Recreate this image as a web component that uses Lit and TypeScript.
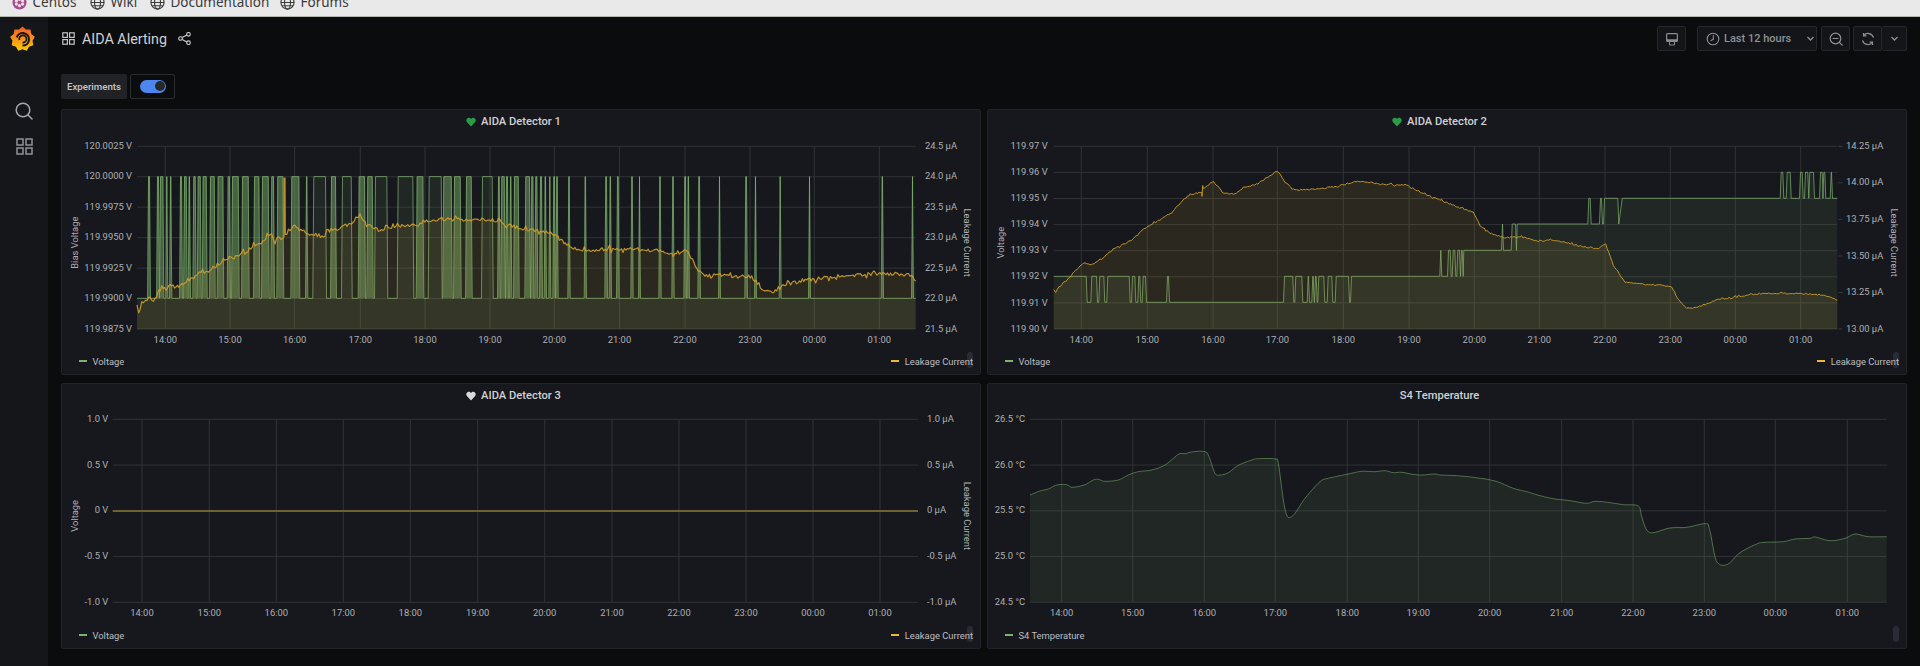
import { LitElement, html, css, svg } from "lit";
import { customElement } from "lit/decorators.js";

type Pt = [number, number];

const zoomMap = (ox: number, oy: number) => (pts: number[][]): Pt[] =>
  pts.map(([a, b]) => [ox + a / 3, oy + b / 3] as Pt);

function rng(seed: number) {
  return () => {
    seed |= 0; seed = (seed + 0x6d2b79f5) | 0;
    let t = Math.imul(seed ^ (seed >>> 15), 1 | seed);
    t = (t + Math.imul(t ^ (t >>> 7), 61 | t)) ^ t;
    return ((t ^ (t >>> 14)) >>> 0) / 4294967296;
  };
}

function noisy(pts: Pt[], amp: number, seed: number, step = 1.5): Pt[] {
  const r = rng(seed);
  const out: Pt[] = [];
  for (let i = 0; i < pts.length - 1; i++) {
    const [x0, y0] = pts[i], [x1, y1] = pts[i + 1];
    const n = Math.max(1, Math.round((x1 - x0) / step));
    for (let k = 0; k < n; k++) {
      const t = k / n;
      const jitter = (r() - 0.5) * (r() < 0.15 ? amp * 2.4 : amp);
      out.push([x0 + (x1 - x0) * t, y0 + (y1 - y0) * t + jitter]);
    }
  }
  out.push(pts[pts.length - 1]);
  return out;
}

function smooth(pts: Pt[]): Pt[] {
  const out: Pt[] = [];
  for (let i = 0; i < pts.length - 1; i++) {
    const p0 = pts[Math.max(0, i - 1)], p1 = pts[i], p2 = pts[i + 1], p3 = pts[Math.min(pts.length - 1, i + 2)];
    for (let k = 0; k < 6; k++) {
      const t = k / 6, t2 = t * t, t3 = t2 * t;
      const f = (a: number, b: number, c: number, d: number) =>
        0.5 * (2 * b + (c - a) * t + (2 * a - 5 * b + 4 * c - d) * t2 + (3 * b - a - 3 * c + d) * t3);
      out.push([f(p0[0], p1[0], p2[0], p3[0]), f(p0[1], p1[1], p2[1], p3[1])]);
    }
  }
  out.push(pts[pts.length - 1]);
  return out;
}

function pulses(intervals: number[][], lo: number, hi: number): Pt[] {
  const out: Pt[] = [];
  for (const [a, b] of intervals) {
    out.push([a - 0.5, lo], [a + 0.5, hi], [b - 0.5, hi], [b + 0.5, lo]);
  }
  return out;
}

const toD = (pts: Pt[]) => "M" + pts.map(([x, y]) => `${x.toFixed(1)} ${y.toFixed(1)}`).join("L");
const toArea = (pts: Pt[], base: number) =>
  `${toD(pts)}L${pts[pts.length - 1][0].toFixed(1)} ${base}L${pts[0][0].toFixed(1)} ${base}Z`;

const Z3 = zoomMap(50, 105), Z4 = zoomMap(500, 105), Z5 = zoomMap(985, 105), Z6 = zoomMap(1440, 105);
const Z8 = zoomMap(985, 380), Z9 = zoomMap(1440, 380);

/* ---------- detector 1 ---------- */
const p1Hi = [
  ...[[294,300],[321,327],[330,340],[349,352],[360,364],[390,396],[402,410],[416,420],[430,437],[443,452],[458,470],[480,494],
    [503,520],[533,540],[546,566],[576,596],[612,628],[636,656],[664,672],[682,700],[724,748],[768,772],[790,828],[843,858],
    [876,905],[926,945],[952,968],[975,1012],[1043,1090],[1100,1120],[1136,1175],[1180,1205],[1212,1232],[1248,1265],[1296,1328]
  ].map(([a,b]) => [50 + a/3, 50 + b/3]),
  ...[[1344,1349]].map(([a,b]) => [50 + a/3, 50 + b/3]),
  ...[[4,14],[18,24],[30,34],[42,56],[76,90],[94,100],[106,112],[120,126],[134,138],[148,151],[160,165],[169,173],[205,209],
    [254,258],[316,321],[329,333],[351,356],[394,398],[417,420],[478,482],[517,521],[553,558],[563,567],[595,600],[657,660],
    [736,741],[765,768],[839,842],[927,930],[1145,1149],[1236,1239]].map(([a,b]) => [500 + a/3, 500 + b/3]),
];
const GLOW = 298.3, GHIGH = 176.6;
const p1Green: Pt[] = [[137, GLOW], ...pulses(p1Hi, GLOW, GHIGH), [915.7, GLOW]];
/* Narrow pulses read as translucent bright bands in the source chart. */
const p1Bands = p1Hi.filter(([a, b]) => b - a < 9 && a < 560 || b - a < 3.5);

const p1Yb: Pt[] = [
  ...Z3([[261,600],[266,622],[275,595],[300,578],[310,588],[335,548],[365,543],[400,540],[440,510],[480,495],[520,465],[580,445],[620,420],[665,390],[675,408],[702,395]]),
];
const p1Yc: Pt[] = [
  ...Z3([[706,393],[720,375],[735,362],[770,388],[825,398],[830,375],[860,375],[900,355],[930,330],[945,355],[990,378],[1020,368],[1060,362],[1100,362],[1120,350],[1180,342],[1240,345],[1300,342]]),
  ...Z4([[0,352],[60,370],[130,378],[165,390],[205,425],[225,432],[262,438],[320,432],[400,432],[480,438],[520,445],[560,436],[590,490],[610,512],[660,510],[700,515],[755,515],[790,555],[830,560],[850,540],[920,525],[1000,515],[1050,512],[1140,505],[1230,510],[1247,528]]),
];
const p1Yellow: Pt[] = [...noisy(p1Yb, 4, 11), [284, 178], [285, 178], ...noisy(p1Yc, 3.4, 12)];

/* ---------- detector 2 ---------- */
const L = { l1: 302.3, l2: 276.3, l3: 250.3, l4: 224, l5: 198.3, l6: 172.3 };
const m5 = (v: number[][]) => v.map(([a, b]) => [985 + a / 3, 985 + b / 3]);
const m6 = (v: number[][]) => v.map(([a, b]) => [1440 + a / 3, 1440 + b / 3]);
const p2Green: Pt[] = [
  [1053.7, L.l2],
  ...pulses(m5([[206,305],[319,336],[343,358],[367,434],[441,451],[460,466],[473,483],[546,552],[897,925],[931,952],[968,972],[982,986],[990,995],[1000,1018],[1028,1042],[1052,1092],[1098,1365]]), L.l1, L.l2).slice(2, -1),
  ...pulses(m6([[1,4],[24,32],[38,46],[52,60],[63,68]]), L.l2, L.l3),
  ...pulses(m6([[70,185]]), L.l2, L.l3).slice(1, 3),
  ...pulses(m6([[186,189],[215,228]]), L.l3, L.l4),
  ...pulses(m6([[230,442]]), L.l3, L.l4).slice(1, 3),
  ...pulses(m6([[445,452],[480,486],[492,535]]), L.l4, L.l5),
  ...pulses(m6([[545,1020]]), L.l4, L.l5).slice(1, 3),
  ...pulses(m6([[1022,1030],[1040,1052],[1080,1088],[1095,1105],[1108,1122],[1140,1148],[1150,1156],[1172,1176]]), L.l5, L.l6),
  [1837.3, L.l5],
];
const p2Yellow: Pt[] = noisy([
  ...Z5([[206,558],[212,562],[222,545],[250,520],[285,482],[300,472],[315,480],[350,462],[385,432],[440,405],[480,370],[520,347],[560,322],[590,290],[615,268],[650,262],[651,275],[653,242],[655,250],[685,228],[712,262],[750,268],[775,248],[810,240],[840,222],[878,198],[900,232],[930,255],[1000,252],[1050,245],[1100,232],[1130,228],[1200,240],[1260,238],[1320,268],[1365,285]]),
  ...Z6([[50,305],[100,322],[120,360],[150,385],[190,398],[240,395],[290,408],[340,405],[400,418],[470,432],[497,418],[520,480],[555,532],[580,535],[640,538],[695,545],[720,590],[740,610],[770,608],[840,582],[900,575],[935,568],[1000,565],[1080,565],[1150,570],[1192,585]]),
], 1.4, 23);

/* ---------- S4 temperature ---------- */
const tempLine: Pt[] = smooth([
  ...Z8([[135,345],[165,333],[190,327],[215,315],[245,314],[262,322],[300,314],[325,300],[340,298],[360,304],[400,300],[430,285],[460,275],[500,270],[540,255],[580,223],[600,221],[625,215],[660,215],[672,230],[690,280],[705,285],[730,278],[760,256],[800,240],[820,236],[870,237],[880,250],[895,360],[905,405],[915,412],[930,400],[960,355],[1005,305],[1030,295],[1090,282],[1130,274],[1170,275],[1200,272],[1225,278],[1250,277],[1300,285],[1350,282]]),
  ...Z9([[0,285],[50,287],[100,292],[165,303],[220,325],[260,335],[300,347],[340,356],[390,362],[440,370],[465,364],[510,368],[550,374],[595,378],[605,410],[620,450],[640,458],[690,444],[740,442],[795,431],[808,445],[825,530],[835,550],[850,556],[870,548],[900,518],[950,492],[975,487],[1030,485],[1065,477],[1110,475],[1125,471],[1170,482],[1215,475],[1245,462],[1285,470],[1340,470]]),
]);

const GREEN = "#7eb26d", YELLOW = "#eab839", YLINE = "#cf9f2c";

interface Series { pts: Pt[]; color: string; fill: string; w?: number; op?: number }
interface Label { t: string; y: number }
interface PanelSpec {
  px: number; py: number; title: string; heart?: string;
  x0: number; x1: number; y0: number; y1: number;
  hLines: number[]; left: Label[]; leftEnd: number;
  right?: Label[]; rightStart?: number; rightTicks?: boolean;
  xTicks: number[]; leftTitle?: string; leftTitleX?: number; rightTitle?: string; rightTitleX?: number;
  series: Series[]; legend: { t: string; c: string }[]; legendRight?: { t: string; c: string };
  zero?: number; bands?: number[][];
}

const evenly = (a: number, b: number, n: number) => Array.from({ length: n }, (_, i) => a + ((b - a) * i) / (n - 1));
const labelled = (ts: string[], a: number, b: number): Label[] => {
  const ys = evenly(a, b, ts.length);
  return ts.map((t, i) => ({ t, y: ys[i] }));
};
const HOURS = ["14:00","15:00","16:00","17:00","18:00","19:00","20:00","21:00","22:00","23:00","00:00","01:00"];

const PANELS: PanelSpec[] = [
  {
    px: 61, py: 109, title: "AIDA Detector 1", heart: "#299c46",
    x0: 137, x1: 915.7, y0: 146.3, y1: 329,
    hLines: evenly(146.3, 329, 7),
    left: labelled(["120.0025 V","120.0000 V","119.9975 V","119.9950 V","119.9925 V","119.9900 V","119.9875 V"], 146.3, 329), leftEnd: 132,
    right: labelled(["24.5 µA","24.0 µA","23.5 µA","23.0 µA","22.5 µA","22.0 µA","21.5 µA"], 146.3, 329), rightStart: 925,
    xTicks: [165.3,230,294.6,360.3,425,490,554.3,619.5,685,750,814.3,879.3],
    leftTitle: "Bias Voltage", leftTitleX: 74.7, rightTitle: "Leakage Current", rightTitleX: 967,
    bands: p1Bands,
    series: [
      { pts: p1Green, color: GREEN, fill: GREEN, w: 1, op: 0.72 },
      { pts: p1Yellow, color: YLINE, fill: YELLOW, w: 1.2, op: 0.9 },
    ],
    legend: [{ t: "Voltage", c: GREEN }], legendRight: { t: "Leakage Current", c: YELLOW },
  },
  {
    px: 987, py: 109, title: "AIDA Detector 2", heart: "#299c46",
    x0: 1053.7, x1: 1837.3, y0: 146.3, y1: 329,
    hLines: evenly(146.3, 329, 8),
    left: labelled(["119.97 V","119.96 V","119.95 V","119.94 V","119.93 V","119.92 V","119.91 V","119.90 V"], 146.3, 329), leftEnd: 1047.7,
    right: labelled(["14.25 µA","14.00 µA","13.75 µA","13.50 µA","13.25 µA","13.00 µA"], 146.3, 329), rightStart: 1846, rightTicks: true,
    xTicks: [1081.3,1147.3,1213,1277.4,1343.3,1409,1474.3,1539.3,1605,1670.3,1735.3,1800.7],
    leftTitle: "Voltage", leftTitleX: 1001, rightTitle: "Leakage Current", rightTitleX: 1893.7,
    series: [
      { pts: p2Green, color: GREEN, fill: GREEN, w: 1, op: 0.72 },
      { pts: p2Yellow, color: YLINE, fill: YELLOW, w: 1, op: 0.9 },
    ],
    legend: [{ t: "Voltage", c: GREEN }], legendRight: { t: "Leakage Current", c: YELLOW },
  },
  {
    px: 61, py: 383, title: "AIDA Detector 3", heart: "#d8d9da",
    x0: 112.7, x1: 918, y0: 419.3, y1: 602.3,
    hLines: evenly(419.3, 602.3, 5),
    left: labelled(["1.0 V","0.5 V","0 V","-0.5 V","-1.0 V"], 419.3, 602.3), leftEnd: 108.3,
    right: labelled(["1.0 µA","0.5 µA","0 µA","-0.5 µA","-1.0 µA"], 419.3, 602.3), rightStart: 927,
    xTicks: [142,209.3,276.3,343.3,410.3,477.7,544.7,612,679,746,813,880],
    leftTitle: "Voltage", leftTitleX: 74.7, rightTitle: "Leakage Current", rightTitleX: 967,
    series: [], zero: 511,
    legend: [{ t: "Voltage", c: GREEN }], legendRight: { t: "Leakage Current", c: YELLOW },
  },
  {
    px: 987, py: 383, title: "S4 Temperature",
    x0: 1030, x1: 1886.7, y0: 419.3, y1: 602.3,
    hLines: evenly(419.3, 602.3, 5),
    left: labelled(["26.5 °C","26.0 °C","25.5 °C","25.0 °C","24.5 °C"], 419.3, 602.3), leftEnd: 1025,
    xTicks: [1061.7,1132.7,1204.3,1275.3,1347.3,1418.3,1489.7,1561.7,1633,1704.3,1775.3,1847.3],
    series: [{ pts: tempLine, color: GREEN, fill: GREEN, w: 1, op: 0.55 }],
    legend: [{ t: "S4 Temperature", c: GREEN }],
  },
];

const W = 918, H = 217, TITLE_H = 23;

@customElement("graph-panel")
class GraphPanel extends LitElement {
  static properties = { spec: { attribute: false } };
  spec!: PanelSpec;

  static styles = css`
    :host { display: block; min-width: 0; }
    .panel {
      height: 266px; box-sizing: border-box; background: #16181d; border: 1px solid #212327; border-radius: 2px;
      display: flex; flex-direction: column; overflow: hidden; position: relative;
    }
    .title {
      height: 23px; flex: none; display: flex; align-items: center; justify-content: center; gap: 5px;
      font: 500 11.2px Roboto, sans-serif; color: #d0d1d3; padding-right: 15px; box-sizing: border-box;
    }
    .title svg { width: 10px; height: 10px; display: block; }
    .plot { display: block; width: 918px; height: 217px; flex: none; }
    .axis { font-family: Roboto, sans-serif; font-size: 9.4px; fill: #aeb0b3; }
    .legend {
      flex: 1; display: flex; justify-content: space-between; align-items: center; position: relative;
      padding: 0 7px 2px 16.5px; font: 9.4px Roboto, sans-serif; color: #bdbfc2;
    }
    .item { display: flex; align-items: center; gap: 5.5px; }
    .swatch { width: 8.5px; height: 1.5px; display: block; }
    .thumb {
      position: absolute; right: 7px; bottom: 6px; width: 6px; height: 16px; border-radius: 3px; background: #282b34;
    }
  `;

  render() {
    const s = this.spec;
    const vx = s.px + 1, vy = s.py + 1 + TITLE_H;
    return html`<div class="panel">
      <div class="thumb"></div>
      <div class="title">
        ${s.heart ? html`<svg viewBox="0 0 24 24"><path fill=${s.heart} d="M12 22.5 2.6 12.6C-.4 9.4.2 4.6 3.4 2.7 6.5.9 10 2 12 5c2-3 5.500-4.100 8.600-2.300 3.200 1.900 3.800 6.700.8 9.900z"/></svg>` : ""}
        <span>${s.title}</span>
      </div>
      <svg class="plot" viewBox="${vx} ${vy} ${W} ${H}">
        ${s.hLines.map((y) => svg`<line x1=${s.x0} x2=${s.x1} y1=${y} y2=${y} stroke="#303236" stroke-width="1"/>`)}
        ${s.xTicks.map((x) => svg`<line x1=${x} x2=${x} y1=${s.y0} y2=${s.y1} stroke="#303236" stroke-width="1"/>`)}
        ${(s.bands ?? []).map(([a, b]) => svg`<rect x=${a} y=${GHIGH} width=${b - a} height=${GLOW - GHIGH} fill=${GREEN} fill-opacity="0.42"/>`)}
        ${s.series.map((a) => svg`
          <path d=${toArea(a.pts, s.y1)} fill=${a.fill} fill-opacity="0.1"/>
          <path d=${toD(a.pts)} fill="none" stroke=${a.color} stroke-width=${a.w ?? 1} stroke-opacity=${a.op ?? 1} stroke-linejoin="round"/>`)}
        ${s.zero !== undefined ? svg`<line x1=${s.x0} x2=${s.x1} y1=${s.zero} y2=${s.zero} stroke="#6e6230" stroke-width="2"/>` : ""}
        ${s.left.map((l) => svg`<text class="axis" x=${s.leftEnd} y=${l.y + 2.6} text-anchor="end">${l.t}</text>`)}
        ${(s.right ?? []).map((l) => svg`
          ${s.rightTicks ? svg`<line x1=${s.x1 + 1} x2=${s.x1 + 5} y1=${l.y} y2=${l.y} stroke="#3a3c40"/>` : ""}
          <text class="axis" x=${s.rightStart!} y=${l.y + 2.6}>${l.t}</text>`)}
        ${s.xTicks.map((x, i) => svg`<text class="axis" x=${x} y=${s.y1 + 13.6} text-anchor="middle">${HOURS[i]}</text>`)}
        ${s.leftTitle ? svg`<text class="axis" text-anchor="middle" transform="translate(${s.leftTitleX! + 3.2} ${(s.y0 + s.y1) / 2 + 5}) rotate(-90)">${s.leftTitle}</text>` : ""}
        ${s.rightTitle ? svg`<text class="axis" text-anchor="middle" transform="translate(${s.rightTitleX! - 3.2} ${(s.y0 + s.y1) / 2 + 5}) rotate(90)">${s.rightTitle}</text>` : ""}
      </svg>
      <div class="legend">
        <div>${s.legend.map((l) => html`<div class="item"><i class="swatch" style="background:${l.c}"></i>${l.t}</div>`)}</div>
        ${s.legendRight ? html`<div class="item"><i class="swatch" style="background:${s.legendRight.c}"></i>${s.legendRight.t}</div>` : ""}
      </div>
    </div>`;
  }
}

const gearPoints = (() => {
  const pts: string[] = [];
  for (let i = 0; i < 18; i++) {
    const a = (i * Math.PI) / 9 - Math.PI / 2;
    const r = i % 2 === 0 ? 12 : 9.8;
    pts.push(`${(12 + r * Math.cos(a)).toFixed(2)},${(12 + r * Math.sin(a)).toFixed(2)}`);
  }
  return pts.join(" ");
})();

const globe = html`<svg class="glb" viewBox="0 0 16 16" fill="none" stroke="#3c3c3c" stroke-width="1.2"><circle cx="8" cy="8" r="7"/><ellipse cx="8" cy="8" rx="3.200" ry="7"/><path d="M1 8h14M2 4.500h12M2 11.500h12"/></svg>`;

@customElement("app-root")
class AppRoot extends LitElement {
  static styles = css`
    :host { display: block; width: 1920px; height: 666px; overflow: hidden; background: #0b0c0e; font-family: Roboto, sans-serif; }
    .bookmarks {
      height: 17px; box-sizing: border-box; background: #e9e9e9; border-bottom: 1px solid #b5b5b0;
      display: flex; align-items: flex-end; overflow: hidden; padding: 0 0 10px 12px;
      font: 13.5px "Noto Sans", sans-serif; color: #3a3a3a;
    }
    .mark { display: flex; align-items: center; gap: 5.500px; line-height: 20px; flex: none; height: 20px; margin-bottom: -6px; }
    .mark.c { width: 78px; } .mark.w { width: 60px; } .mark.d { width: 130px; }
    .mark svg { width: 15px; height: 15px; display: block; flex: none; }
    .shell { display: flex; height: 649px; }
    .side {
      width: 48px; flex: none; background: #14161a; display: flex; flex-direction: column; align-items: center; padding-top: 9px; box-sizing: border-box;
    }
    .logo { width: 25px; height: 26px; display: block; margin-left: -4px; }
    .side .s1 { width: 18px; height: 18px; margin-top: 50px; display: block; }
    .side .s2 { width: 17px; height: 17px; margin-top: 18px; display: block; }
    .main { flex: 1; min-width: 0; padding: 9px 13px 0; box-sizing: border-box; }
    .top { height: 25px; display: flex; align-items: center; }
    .crumb { display: flex; align-items: center; color: #d0d1d3; font-size: 14.300px; flex: 1; margin-left: 1px; }
    .crumb .ic { width: 13px; height: 13px; margin-right: 7px; }
    .crumb .sh { width: 13px; height: 13px; margin-left: 11px; }
    .tbtn {
      height: 25px; box-sizing: border-box; border: 1px solid #25272b; border-radius: 2px; background: #131519;
      display: flex; align-items: center; justify-content: center; color: #8f9194;
    }
    .tbtn.sq { width: 29px; }
    .tbtn.time { width: 120px; margin: 0 4px 0 11px; font-weight: 500; font-size: 11px; justify-content: flex-start; padding-left: 8px; gap: 4px; white-space: nowrap; }
    .tbtn.time .chev { margin-left: 11px; }
    .group { display: flex; margin-left: 3px; }
    .group .tbtn + .tbtn { width: 25px; border-left: none; }
    .tbtn svg { width: 14px; height: 14px; display: block; flex: none; }
    .tbtn svg.chev { width: 9px; height: 9px; }
    .vars { height: 24.500px; margin-top: 23px; display: flex; gap: 3px; }
    .vlabel {
      width: 66px; box-sizing: border-box; background: #202226; border-radius: 2px; font: 500 9.700px Roboto, sans-serif;
      color: #c6c7c9; display: flex; align-items: center; justify-content: center;
    }
    .switch { width: 45px; box-sizing: border-box; border: 1px solid #2a2c30; border-radius: 2px; display: flex; align-items: center; justify-content: center; }
    .track { width: 26px; height: 13px; border-radius: 7px; background: #4d86ef; display: flex; justify-content: flex-end; align-items: center; padding: 0 1px; box-sizing: border-box; }
    .knob { width: 10px; height: 10px; border-radius: 50%; background: #25272b; }
    .grid { display: grid; grid-template-columns: 920px 920px; column-gap: 6px; row-gap: 8px; margin-top: 10.500px; }
  `;

  render() {
    return html`
      <div class="bookmarks">
        <div class="mark c">
          <svg viewBox="0 0 16 16"><circle cx="8" cy="8" r="7.500" fill="#a14f8c"/><g fill="#f2dbe9"><circle cx="8" cy="4.600" r="1.700"/><circle cx="8" cy="11.400" r="1.700"/><circle cx="4.700" cy="6.300" r="1.700"/><circle cx="11.300" cy="6.300" r="1.700"/><circle cx="4.700" cy="9.700" r="1.700"/><circle cx="11.300" cy="9.700" r="1.700"/></g></svg>
          <span>Centos</span>
        </div>
        <div class="mark w">${globe}<span>Wiki</span></div>
        <div class="mark d">${globe}<span>Documentation</span></div>
        <div class="mark">${globe}<span>Forums</span></div>
      </div>
      <div class="shell">
        <nav class="side">
          <svg class="logo" viewBox="0 0 24 24">
            <defs><linearGradient id="lg" x1="0" y1="0" x2="0" y2="1"><stop offset="0" stop-color="#f05a28"/><stop offset="1" stop-color="#fbca0a"/></linearGradient></defs>
            <polygon points=${gearPoints} fill="url(#lg)"/>
            <path d="M6.500 10.500a6 6 0 1 1 5.500 7.800" fill="none" stroke="#14161a" stroke-width="2"/>
            <path d="M9 13a3.500 3.500 0 1 1 3 2.500" fill="none" stroke="#14161a" stroke-width="1.600"/>
          </svg>
          <svg class="s1" viewBox="0 0 18 18" fill="none" stroke="#a5a8ad" stroke-width="1.500"><circle cx="8" cy="8" r="6.800"/><path d="M13 13l4 4" stroke-linecap="round"/></svg>
          <svg class="s2" viewBox="0 0 17 17" fill="none" stroke="#8f9297" stroke-width="1.500"><rect x="1" y="1" width="6" height="6"/><rect x="10" y="1" width="6" height="6"/><rect x="1" y="10" width="6" height="6"/><rect x="10" y="10" width="6" height="6"/></svg>
        </nav>
        <main class="main">
          <div class="top">
            <div class="crumb">
              <svg class="ic" viewBox="0 0 13 13" fill="none" stroke="#c4c5c8" stroke-width="1.200"><rect x=".8" y=".8" width="4.600" height="4.600"/><rect x="7.600" y=".8" width="4.600" height="4.600"/><rect x=".8" y="7.600" width="4.600" height="4.600"/><rect x="7.600" y="7.600" width="4.600" height="4.600"/></svg>
              <span>AIDA Alerting</span>
              <svg class="sh" viewBox="0 0 13 13" fill="none" stroke="#d0d1d3" stroke-width="1.100"><circle cx="2.500" cy="6.500" r="1.800"/><circle cx="10.500" cy="2.300" r="1.800"/><circle cx="10.500" cy="10.700" r="1.800"/><path d="M4.200 5.600l4.700-2.500M4.200 7.400l4.700 2.500"/></svg>
            </div>
            <div class="tbtn sq">
              <svg viewBox="0 0 14 14" fill="#8a8c90"><path fill-rule="evenodd" d="M2.500 1h9A1.500 1.500 0 0 1 13 2.500v6a1.500 1.500 0 0 1-1.500 1.500H10v2.500a1 1 0 0 1-1 1H5a1 1 0 0 1-1-1V10H2.500A1.500 1.500 0 0 1 1 8.500v-6A1.500 1.500 0 0 1 2.500 1zM2.200 2.200v5h9.600v-5zM5 10v2.500h4V10z"/></svg>
            </div>
            <div class="tbtn time">
              <svg viewBox="0 0 14 14" fill="none" stroke="#8f9194" stroke-width="1.100"><circle cx="7" cy="7" r="5.800"/><path d="M7.300 3.600V7.300L5 8.500" stroke-linecap="round"/></svg>
              <span>Last 12 hours</span>
              <svg class="chev" viewBox="0 0 9 9" fill="none" stroke="#8f9194" stroke-width="1.300"><path d="M1.500 3l3 3 3-3"/></svg>
            </div>
            <div class="tbtn sq">
              <svg viewBox="0 0 14 14" fill="none" stroke="#8f9194" stroke-width="1.200"><circle cx="6.500" cy="6.500" r="5.300"/><path d="M4 6.500h5M10.400 10.400l2.800 2.800" stroke-linecap="round"/></svg>
            </div>
            <div class="group">
              <div class="tbtn sq">
                <svg viewBox="0 0 14 14" fill="none" stroke="#8f9194" stroke-width="1.200"><path d="M12.500 5.500A5.800 5.800 0 0 0 2.500 3.600M1.500 8.500a5.800 5.800 0 0 0 10 1.900"/><path d="M2.500 1v2.900h2.900M11.500 13v-2.900H8.600"/></svg>
              </div>
              <div class="tbtn">
                <svg class="chev" viewBox="0 0 9 9" fill="none" stroke="#8f9194" stroke-width="1.300"><path d="M1.500 3l3 3 3-3"/></svg>
              </div>
            </div>
          </div>
          <div class="vars">
            <div class="vlabel">Experiments</div>
            <div class="switch"><div class="track"><div class="knob"></div></div></div>
          </div>
          <div class="grid">
            ${PANELS.map((p) => html`<graph-panel .spec=${p}></graph-panel>`)}
          </div>
        </main>
      </div>
    `;
  }
}
